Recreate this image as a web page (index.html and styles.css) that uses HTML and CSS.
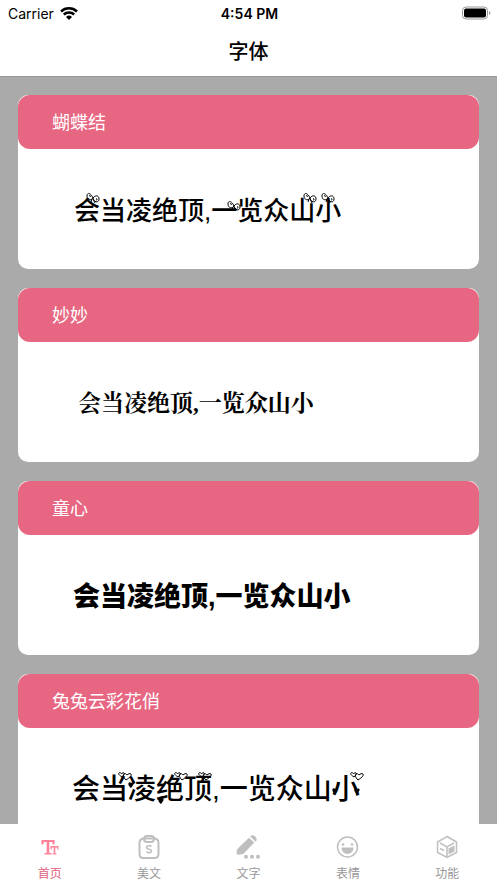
FILE: index.html
```html
<!DOCTYPE html>
<html lang="zh-CN">
<head>
<meta charset="utf-8">
<meta name="viewport" content="width=device-width, initial-scale=1">
<title>字体</title>
<link rel="stylesheet" href="styles.css">
</head>
<body>
<svg class="symbols" aria-hidden="true">
  <symbol id="bow" viewBox="0 0 14 12">
    <path d="M7 6C5 1 1 0 1 4c0 4 4 5 6 2c2-3 6-3 6 1c0 4-5 4-6-1M3 4c1-1 2 0 1 1M10 7c1-1 2 1 0 1M6 7l-1 3M7 7l2 4"/>
  </symbol>
  <symbol id="hearts" viewBox="0 0 14 10">
    <path d="M4 5C1 3 0 2 1 1c1-1 2 0 3 1c0-1 1-2 2-1c1 1-1 3-2 4zM8 8C5 5 5 3 6 2c1-1 2 0 3 1c1-1 3-2 4-1c1 2-2 4-5 6z"/>
  </symbol>
  <symbol id="heart" viewBox="0 0 6 6">
    <path class="solid" d="M3 6C0 4 0 1 1 .5c1-.5 2 0 2 1c0-1 2-1.500 2.500-.5c.5 1.500-1 3-2.500 5z"/>
  </symbol>
</svg>
<div class="app">
  <header class="top">
    <div class="status">
      <div class="carrier"><span>Carrier</span>
        <svg class="wifi" viewBox="0 0 18 13"><path d="M1 4.500a11.800 11.800 0 0 1 16 0M3.800 7.500a7.600 7.600 0 0 1 10.400 0"/><path class="solid" d="M9 13L6 10a4.300 4.300 0 0 1 6 0z"/></svg>
      </div>
      <time>4:54 PM</time>
      <svg class="battery" viewBox="0 0 30 14"><rect class="shell" x="1.500" y="1" width="25" height="12" rx="3.500"/><rect x="3" y="2.500" width="22" height="9" rx="2"/><path class="cap" d="M28 5v4c2-1 2-3 0-4z"/></svg>
    </div>
    <h1>字体</h1>
  </header>
  <main class="list">
    <article class="card">
      <h2>蝴蝶结</h2>
      <p class="sample bowknot"><span class="ch">会<svg class="deco bow"><use href="#bow"/></svg></span>当凌绝顶,<span class="ch">一<svg class="deco bow low"><use href="#bow"/></svg></span>览众<span class="ch">山<svg class="deco bow edge"><use href="#bow"/></svg></span><span class="ch">小<svg class="deco bow top-right"><use href="#bow"/></svg></span></p>
    </article>
    <article class="card">
      <h2>妙妙</h2>
      <p class="sample miaomiao">会当凌绝顶,一览众山小</p>
    </article>
    <article class="card">
      <h2>童心</h2>
      <p class="sample childlike">会当凌绝顶,一览众山小</p>
    </article>
    <article class="card">
      <h2>兔兔云彩花俏</h2>
      <p class="sample rabbit">会<span class="ch">当<svg class="deco hearts"><use href="#hearts"/></svg></span><span class="ch">凌<svg class="deco heart left"><use href="#heart"/></svg></span><span class="ch">绝<svg class="deco hearts"><use href="#hearts"/></svg><svg class="deco heart foot"><use href="#heart"/></svg></span><span class="ch">顶<svg class="deco hearts inner"><use href="#hearts"/></svg></span>,一览众山<span class="ch">小<svg class="deco hearts"><use href="#hearts"/></svg><svg class="deco heart side-left"><use href="#heart"/></svg><svg class="deco heart side-right"><use href="#heart"/></svg></span></p>
    </article>
  </main>
  <nav class="tabs" aria-label="主导航">
    <a href="#home" class="tab active" aria-current="page">
      <svg viewBox="0 0 24 24"><path class="fill" d="M3.500 5H16.500v4.500H15L14 7H11.300V18H13.500v1.500H6.500V18H8.700V7H6L5 9.500H3.500z"/><path class="fill" d="M12.500 11H20.500v3.500H19.500L19 12.500H17.300V18.500H18.500v1H14.500v-1H15.700V12.500H14L13.500 14.500H12.500z"/></svg>
      <span>首页</span></a>
    <a href="#articles" class="tab">
      <svg viewBox="0 0 24 24"><path d="M7 3.500C4 3.500 2.500 5 2.500 8v11c0 3 1 4 4 4h11c3 0 4-1 4-4V8c0-3-1.500-4.500-4.500-4.500"/><rect x="7" y="1" width="10" height="6" rx="3"/><path d="M7 3.500h10"/><path class="thin" d="M14.500 11.500c-1-1.300-5-1.300-5 1c0 2.300 5 1 5 3.500c0 2.200-4 2-5 .5"/></svg>
      <span>美文</span></a>
    <a href="#text" class="tab">
      <svg viewBox="0 0 24 24"><path class="fill" d="M13 2.700L18.300 7.500L8 18.300C6 20 3 19.600 .700 19.600c0-2.500-.400-4.600 1.300-6.300zM14.300 1.200C17-1.500 22.500 3 20 6.200L19.300 6.500L14.200 1.600z"/><circle class="fill" cx="10" cy="21.700" r="2"/><circle class="fill" cx="16" cy="21.700" r="2"/><circle class="fill" cx="22" cy="21.700" r="2"/></svg>
      <span>文字</span></a>
    <a href="#emoji" class="tab">
      <svg viewBox="0 0 24 24"><circle class="thin" cx="11.500" cy="12" r="10"/><circle class="fill" cx="7" cy="9.500" r="1.300"/><circle class="fill" cx="16" cy="9.500" r="1.300"/><path class="fill" d="M5.500 12.500h12c0 8.500-12 8.500-12 0z"/></svg>
      <span>表情</span></a>
    <a href="#tools" class="tab">
      <svg viewBox="0 0 24 24"><path class="thin" d="M12 1.500L21.500 7v10.500L12 22.500L2.500 17.500V7zM5 8l7 4l7-4M12 12v10M5 13.500l4 2"/><path class="fill" d="M13.500 13.500L19.500 10.500V16.500L13.500 19.500z"/></svg>
      <span>功能</span></a>
  </nav>
</div>
</body>
</html>
```

FILE: styles.css
```css
* { box-sizing: border-box; }
body {
  margin: 0;
  font-family: Inter, "Noto Sans CJK SC", sans-serif;
  background: #fff;
  color: #000;
}
.symbols { position: absolute; width: 0; height: 0; }
.app { display: flex; flex-direction: column; height: 100vh; }
.top { flex: none; border-bottom: 1px solid #999; }
.status {
  display: grid;
  grid-template-columns: 1fr auto 1fr;
  align-items: center;
  height: 26px;
  padding: 0 6px 0 8px;
  font-size: 14px;
}
.carrier { display: flex; align-items: center; gap: 6px; }
.wifi { width: 18px; height: 13px; fill: none; stroke: #000; stroke-width: 2.5; }
.solid { fill: #000; stroke: none; }
.status time { font-weight: 600; }
.battery { width: 30px; height: 14px; justify-self: end; }
.shell { fill: none; stroke: #999; }
.cap { fill: #999; }
h1 {
  margin: 0;
  height: 50px;
  font-size: 20px;
  line-height: 52px;
  font-weight: 500;
  text-align: center;
}
.list {
  flex: 1;
  min-height: 0;
  overflow: hidden;
  display: flex;
  flex-direction: column;
  gap: 19px;
  padding: 18px;
  background: #aaa;
}
.card { flex: none; border-radius: 10px; background: #fff; }
.card h2 {
  margin: 0;
  height: 54px;
  padding: 0 34px;
  border-radius: 12px;
  background: #e76782;
  color: #fff;
  font-size: 18px;
  line-height: 56px;
  font-weight: 400;
}
.sample {
  margin: 0;
  height: 120px;
  padding: 0 55px;
  font-family: "Liberation Sans", "Noto Sans CJK SC", sans-serif;
  line-height: 124px;
  white-space: nowrap;
}
.bowknot { padding-left: 56px; font-size: 26px; font-weight: 500; }
.miaomiao { padding-left: 60px; font-family: "Liberation Serif", "Noto Serif CJK SC", "Noto Sans CJK SC", serif; font-size: 23px; font-weight: 700; }
.childlike { font-size: 27px; font-weight: 900; }
.rabbit { padding-left: 54px; font-size: 28px; font-weight: 500; }
.ch { display: inline-block; position: relative; line-height: 1; }
.deco { position: absolute; overflow: visible; fill: none; stroke: #000; stroke-width: 1; }
.bow { width: 14px; height: 12px; top: -6px; right: 0; }
.bow.low { top: 2px; right: -4px; }
.bow.edge { right: -2px; }
.bow.top-right { right: 6px; }
.hearts { width: 14px; height: 10px; top: -4px; right: -4px; }
.hearts.inner { right: 0; }
.heart { width: 6px; height: 6px; }
.heart.left { left: 0; top: 6px; }
.heart.foot { left: 2px; bottom: 0; }
.heart.side-left { left: 0; top: 12px; }
.heart.side-right { right: 0; top: 12px; }
.tabs {
  flex: none;
  display: grid;
  grid-template-columns: repeat(5, 1fr);
  height: 59px;
  background: #fff;
}
.tab {
  display: flex;
  flex-direction: column;
  align-items: center;
  gap: 6px;
  padding-top: 11px;
  color: #999;
  font-size: 12px;
  line-height: 18px;
  text-decoration: none;
}
.tab svg { width: 24px; height: 24px; overflow: visible; fill: none; stroke: #bfbfbf; stroke-width: 2; }
.tab .thin { stroke-width: 1.5; }
.tab .fill { fill: #bfbfbf; stroke: none; }
.tab.active { color: #e0627e; }
.tab.active .fill { fill: #ff8298; }
```
